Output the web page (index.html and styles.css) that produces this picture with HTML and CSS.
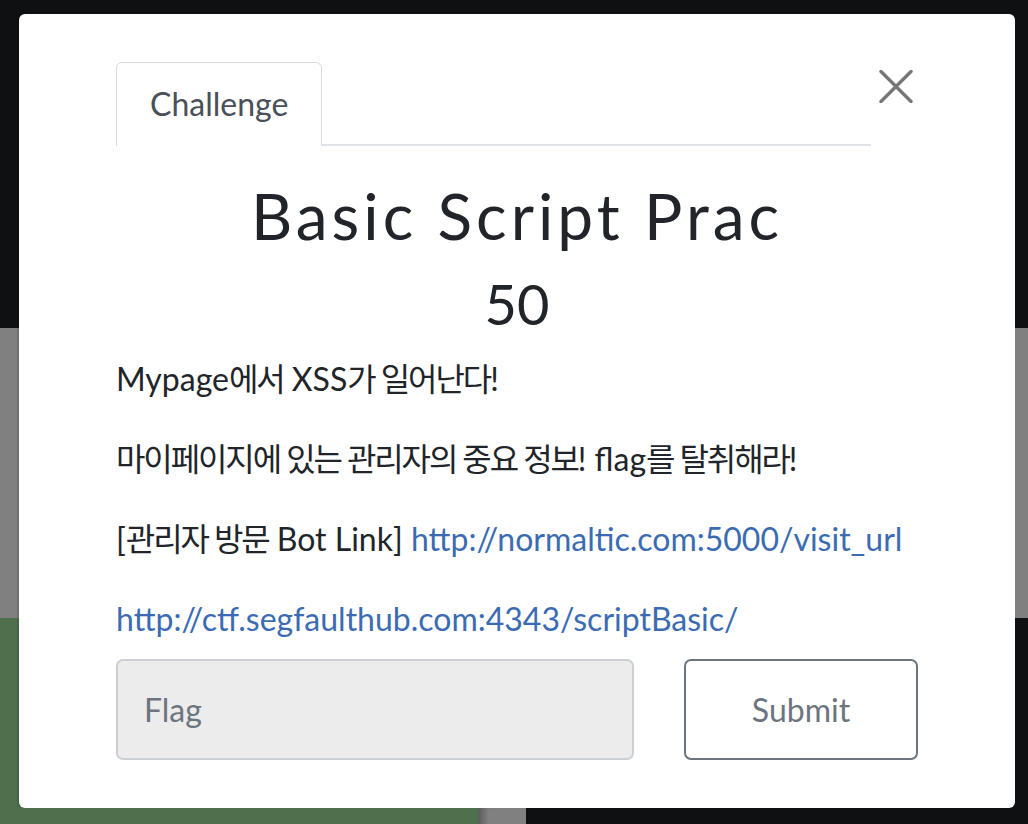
FILE: index.html
```html
<!DOCTYPE html>
<html lang="ko">
<head>
<meta charset="utf-8">
<title>Challenge</title>
<link rel="stylesheet" href="styles.css">
</head>
<body>
<div class="backdrop">
  <div class="band band-top"></div>
  <div class="band band-mid"></div>
  <div class="band band-bottom">
    <div class="seg seg-green"></div>
    <div class="seg seg-gray"></div>
    <div class="seg seg-dark"></div>
  </div>
</div>

<div class="modal">
  <div class="modal-body">
    <div class="modal-head">
      <ul class="tabs">
        <li class="tab">Challenge</li>
      </ul>
      <button class="close" aria-label="Close">
        <svg width="34" height="33" viewBox="0 0 34 33">
          <path d="M2 1.5 L32 31.5 M32 1.5 L2 31.5" stroke="#777" stroke-width="3.4" stroke-linecap="round" fill="none"/>
        </svg>
      </button>
    </div>
    <h2 class="challenge-name">Basic Script Prac</h2>
    <h3 class="challenge-value">50</h3>
    <div class="desc">
      <p>Mypage<span class="ko">에서</span> XSS<span class="ko">가 일어난다</span>!</p>
      <p><span class="ko">마이페이지에 있는 관리자의 중요 정보</span>! flag<span class="ko">를 탈취해라</span>!</p>
      <p>[<span class="ko">관리자 방문</span> Bot Link] <a href="#">http://normaltic.com:5000/visit_url</a></p>
      <p class="last"><a href="#">http://ctf.segfaulthub.com:4343/scriptBasic/</a></p>
    </div>
    <form class="submit-row">
      <input class="flag-input" type="text" placeholder="Flag">
      <button class="submit-btn" type="button">Submit</button>
    </form>
  </div>
</div>
</body>
</html>
```

FILE: styles.css
```css
* { box-sizing: border-box; }

html, body {
  margin: 0;
  padding: 0;
  width: 1028px;
  height: 824px;
  overflow: hidden;
  font-family: "Lato", "Noto Sans CJK KR", sans-serif;
}

.backdrop {
  display: flex;
  flex-direction: column;
  width: 1028px;
  height: 824px;
}

.band-top { height: 328px; background: #0f1012; }
.band-mid { height: 290px; background: #808080; }
.band-bottom { flex: 1; display: flex; }
.seg-green { width: 478px; background: #4f704c; }
.seg-gray { width: 48px; background: linear-gradient(to right, #5a5a5a, #808080 22%, #808080); }
.seg-dark { flex: 1; background: #0f1012; }

.modal {
  position: absolute;
  left: 19px;
  top: 14px;
  width: 996px;
  height: 794px;
  background: #fff;
  border-radius: 6px;
  box-shadow: -2px 0 1px rgba(0,0,0,0.12);
}

.modal-body {
  padding: 48px 97px 49px 97px;
  color: #212529;
}

.modal-head {
  display: flex;
  align-items: flex-start;
}

.tabs {
  flex: 1;
  list-style: none;
  margin: 0;
  padding: 0;
  display: flex;
  border-bottom: 2px solid #e0e3e6;
  height: 84px;
}

.tab {
  font-size: 32px;
  line-height: 48px;
  color: #495057;
  padding: 17px 33px 15px;
  height: 84px;
  border: 1px solid #d9dce0;
  border-bottom: none;
  border-radius: 6px 6px 0 0;
  background: #fff;
  margin-bottom: -2px;
}

.close {
  width: 47px;
  border: none;
  background: none;
  padding: 8px 0 0 8px;
  margin: 0;
  cursor: pointer;
  display: flex;
}

.challenge-name {
  margin: 31px 0 16px;
  text-align: center;
  font-size: 64px;
  line-height: 77px;
  font-weight: 400;
  letter-spacing: 4px;
  color: #212529;
}

.challenge-value {
  margin: 0 0 18px;
  text-align: center;
  font-size: 56px;
  line-height: 67px;
  font-weight: 400;
  color: #212529;
}

.desc p {
  margin: 0 0 32px;
  font-size: 32px;
  line-height: 48px;
}

.desc .ko { letter-spacing: -2.1px; }

.desc p.last { margin-bottom: 16px; }

.desc a {
  color: #3b6cb3;
  text-decoration: none;
}

.submit-row {
  display: flex;
  gap: 50px;
  margin: 0;
}

.flag-input {
  flex: 1;
  height: 101px;
  background: #ececec;
  border: 2px solid #ccd0d5;
  border-radius: 7px;
  padding: 0 26px;
  font-family: "Lato", "Noto Sans CJK KR", sans-serif;
  font-size: 32px;
  color: #495057;
  outline: none;
}

.flag-input::placeholder { color: #6c757d; }

.submit-btn {
  width: 234px;
  height: 101px;
  background: #fff;
  border: 2px solid #6c757d;
  border-radius: 7px;
  font-family: "Lato", "Noto Sans CJK KR", sans-serif;
  font-size: 32px;
  color: #6c757d;
  cursor: pointer;
}
```
